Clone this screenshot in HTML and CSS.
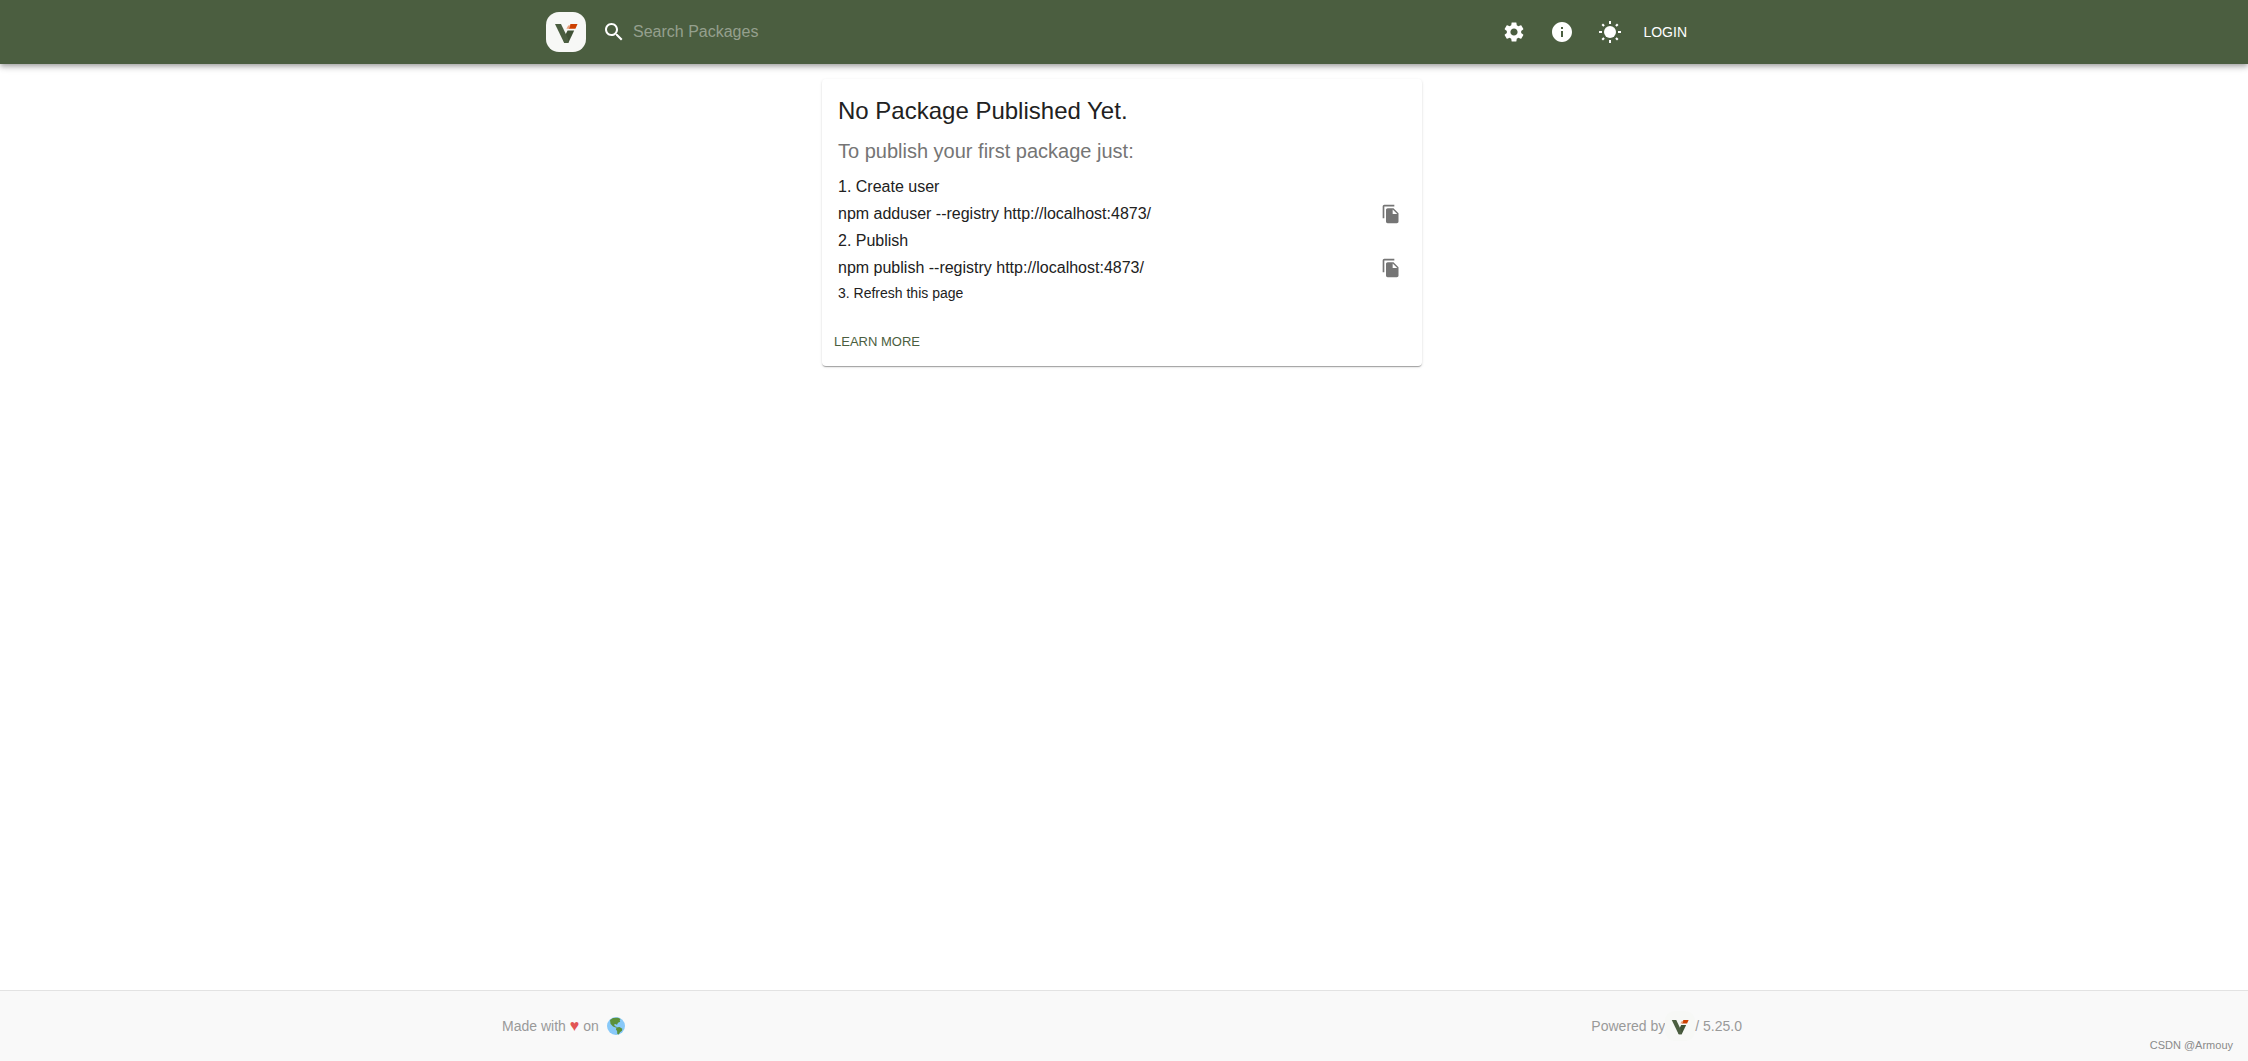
FILE: index.html
```html
<!DOCTYPE html>
<html lang="en">
<head>
<meta charset="utf-8">
<meta name="viewport" content="width=device-width, initial-scale=1">
<title>Verdaccio</title>
<link rel="stylesheet" href="styles.css">
</head>
<body>
<svg class="defs" aria-hidden="true">
  <defs>
    <symbol id="logo" viewBox="0 0 40 40">
      <rect width="40" height="40" rx="13" fill="#f7f8f6"/>
      <path d="M21.600 18.600H28.200L22.300 31H18.600L17 27.500z" fill="#405236"/>
      <path d="M9 12H15L22 26.500L22.300 31H18.200z" fill="#4b5e40"/>
      <path d="M24.500 12H31.500L29.400 16.800H22.500z" fill="#cd4000"/>
      <path d="M22.200 13.600H24.500L23 16.800H20.400z" fill="#e8a07c"/>
    </symbol>
    <symbol id="copy" viewBox="0 0 24 24">
      <path d="M16 1H4c-1.100 0-2 .9-2 2v14h2V3h12V1zm-1 4 6 6v10c0 1.100-.9 2-2 2H7.990C6.890 23 6 22.100 6 21l.01-14c0-1.100.89-2 1.990-2h7zm-1 7h5.500L14 6.500V12z"/>
    </symbol>
  </defs>
</svg>
<header class="header">
  <div class="header-inner">
    <a class="logo" href="#" aria-label="Home"><svg width="40" height="40"><use href="#logo"/></svg></a>
    <label class="search">
      <svg class="icon" viewBox="0 0 24 24"><path d="M15.500 14h-.79l-.28-.27C15.410 12.590 16 11.110 16 9.500 16 5.910 13.090 3 9.500 3S3 5.910 3 9.500 5.910 16 9.500 16c1.610 0 3.090-.59 4.230-1.570l.27.28v.79l5 4.990L20.490 19l-4.990-5zm-6 0C7.010 14 5 11.990 5 9.500S7.010 5 9.500 5 14 7.010 14 9.500 11.990 14 9.500 14z"/></svg>
      <input type="text" placeholder="Search Packages" aria-label="Search Packages">
    </label>
    <nav class="actions">
      <button class="icon-button" type="button" aria-label="Settings"><svg class="icon" viewBox="0 0 24 24"><path d="M19.140 12.940c.04-.3.060-.61.060-.94 0-.32-.02-.64-.07-.94l2.030-1.580c.18-.14.23-.41.12-.61l-1.920-3.320c-.12-.22-.37-.29-.59-.22l-2.390.96c-.5-.38-1.030-.7-1.620-.94l-.36-2.540c-.04-.24-.24-.41-.48-.41h-3.840c-.24 0-.43.17-.47.41l-.36 2.540c-.59.24-1.130.57-1.620.94l-2.390-.96c-.22-.08-.47 0-.59.22L2.740 8.870c-.12.21-.08.47.12.61l2.030 1.580c-.05.3-.09.63-.09.94s.02.64.07.94l-2.030 1.580c-.18.14-.23.41-.12.61l1.920 3.320c.12.22.37.29.59.22l2.390-.96c.5.38 1.030.7 1.620.94l.36 2.540c.05.24.24.41.48.41h3.840c.24 0 .44-.17.47-.41l.36-2.540c.59-.24 1.130-.56 1.620-.94l2.390.96c.22.08.47 0 .59-.22l1.920-3.320c.12-.22.070-.47-.12-.61l-2.010-1.580zM12 15.600c-1.980 0-3.600-1.620-3.600-3.600s1.620-3.600 3.600-3.600 3.600 1.620 3.600 3.600-1.620 3.600-3.600 3.600z"/></svg></button>
      <button class="icon-button" type="button" aria-label="Information"><svg class="icon" viewBox="0 0 24 24"><path d="M12 2C6.480 2 2 6.480 2 12s4.480 10 10 10 10-4.480 10-10S17.520 2 12 2zm1 15h-2v-6h2v6zm0-8h-2V7h2v2z"/></svg></button>
      <button class="icon-button" type="button" aria-label="Switch theme"><svg class="icon" viewBox="0 0 24 24"><circle cx="12" cy="12" r="6"/><path d="M11 1h2v3h-2zM11 20h2v3h-2zM1 11h3v2H1zM20 11h3v2h-3zM3.500 5 5 3.500 6.800 5.300 5.300 6.800zM17.200 5.300 19 3.500 20.500 5 18.700 6.800zM3.500 19 5.300 17.200 6.800 18.700 5 20.500zM17.200 18.700 18.700 17.200 20.500 19 19 20.500z"/></svg></button>
      <button class="login" type="button">LOGIN</button>
    </nav>
  </div>
</header>
<main class="main">
  <section class="card">
    <h1>No Package Published Yet.</h1>
    <h2>To publish your first package just:</h2>
    <div class="row">1. Create user</div>
    <div class="row"><span>npm adduser --registry http://localhost:4873/</span><button class="copy" type="button" aria-label="Copy adduser command"><svg width="20" height="20"><use href="#copy"/></svg></button></div>
    <div class="row">2. Publish</div>
    <div class="row"><span>npm publish --registry http://localhost:4873/</span><button class="copy" type="button" aria-label="Copy publish command"><svg width="20" height="20"><use href="#copy"/></svg></button></div>
    <div class="row small">3. Refresh this page</div>
    <a class="learn" href="#">LEARN MORE</a>
  </section>
</main>
<footer class="footer">
  <div class="footer-inner">
    <div class="made">Made with <span class="heart">♥</span> on
      <svg class="globe" viewBox="0 0 18 18"><circle cx="9" cy="9" r="9" fill="#88c9f9"/><path d="M3 3 6 1l5-.3 2.500 1.200-.8 1.400.5 1.500-2.200 1-1 2-1.800-.8-1.200.8 1 1.500 2 .8-.6.7L6 9.500 3.500 6.800z" fill="#5c913b"/><path d="M9.500 10.500l3-.5 2.800 1.700-.3 2-2 1.500-1.200 2.300-1.500-.5-.2-3-1.200-1.500z" fill="#5c913b"/></svg>
    </div>
    <div class="powered">Powered by <svg width="30" height="30"><use href="#logo"/></svg> / 5.25.0</div>
  </div>
  <div class="credit">CSDN @Armouy</div>
</footer>
</body>
</html>
```
FILE: styles.css
```css
* { box-sizing: border-box; }
body {
  margin: 0;
  min-height: 100vh;
  display: flex;
  flex-direction: column;
  background: #fff;
  color: #212121;
  font-family: "Liberation Sans", Arial, sans-serif;
  font-size: 16px;
}
button, input { font: inherit; color: inherit; background: none; border: 0; padding: 0; }
button { cursor: pointer; }
a { color: inherit; text-decoration: none; }
svg { display: block; flex: none; }
.defs { position: absolute; width: 0; height: 0; }
.icon { width: 24px; height: 24px; fill: currentColor; }

.header {
  min-height: 64px;
  display: flex;
  justify-content: center;
  padding: 0 4px 0 0;
  background: #4b5e40;
  color: #fff;
  box-shadow: 0 2px 4px -1px rgba(0,0,0,.2), 0 4px 5px rgba(0,0,0,.14), 0 1px 10px rgba(0,0,0,.12);
}
.header-inner {
  width: 100%;
  max-width: 1152px;
  display: flex;
  align-items: center;
}
.search { flex: 1; display: flex; align-items: center; gap: 7px; margin-left: 16px; }
.search input { flex: 1; height: 32px; outline: 0; }
.search input::placeholder { color: #95a08e; opacity: 1; }
.actions { display: flex; align-items: center; }
.icon-button { width: 48px; height: 48px; display: grid; place-items: center; }
.login { padding: 8px 11px 8px 9px; font-size: 14px; }

.main { flex: 1; padding: 15px 4px 15px 0; display: flex; justify-content: center; align-items: flex-start; }
.card {
  width: 100%;
  max-width: 600px;
  padding: 16px 16px 9px;
  border-radius: 4px;
  box-shadow: 0 2px 1px -1px rgba(0,0,0,.2), 0 1px 1px rgba(0,0,0,.14), 0 1px 3px rgba(0,0,0,.12);
}
h1, h2 { margin: 0; font-weight: 400; }
h1 { font-size: 24px; line-height: 32px; margin-bottom: 8px; }
h2 { font-size: 20px; line-height: 32px; margin-bottom: 6px; color: #757575; }
.row { display: flex; justify-content: space-between; align-items: center; height: 27px; }
.small { font-size: 14px; height: 24px; }
.copy { width: 30px; height: 27px; display: grid; place-items: center; fill: #757575; }
.learn { display: inline-block; margin: 22px 0 0 -9px; padding: 5px; font-size: 13px; line-height: 20px; color: #4b5e40; }

.footer {
  position: relative;
  min-height: 71px;
  display: flex;
  justify-content: center;
  align-items: center;
  padding: 0 4px 0 0;
  border-top: 1px solid #e3e3e3;
  background: #f9f9f9;
  color: #999;
  font-size: 14px;
}
.footer-inner { width: 100%; max-width: 1240px; display: flex; justify-content: space-between; align-items: center; }
.made { display: flex; align-items: center; gap: 4px; }
.powered { display: flex; align-items: center; }
.heart { color: #e25555; font-size: 16px; line-height: 16px; }
.globe { width: 18px; height: 18px; margin-left: 4px; }
.credit { position: absolute; right: 15px; bottom: 10px; font-size: 11px; line-height: 12px; color: #8a8a8a; }
```
